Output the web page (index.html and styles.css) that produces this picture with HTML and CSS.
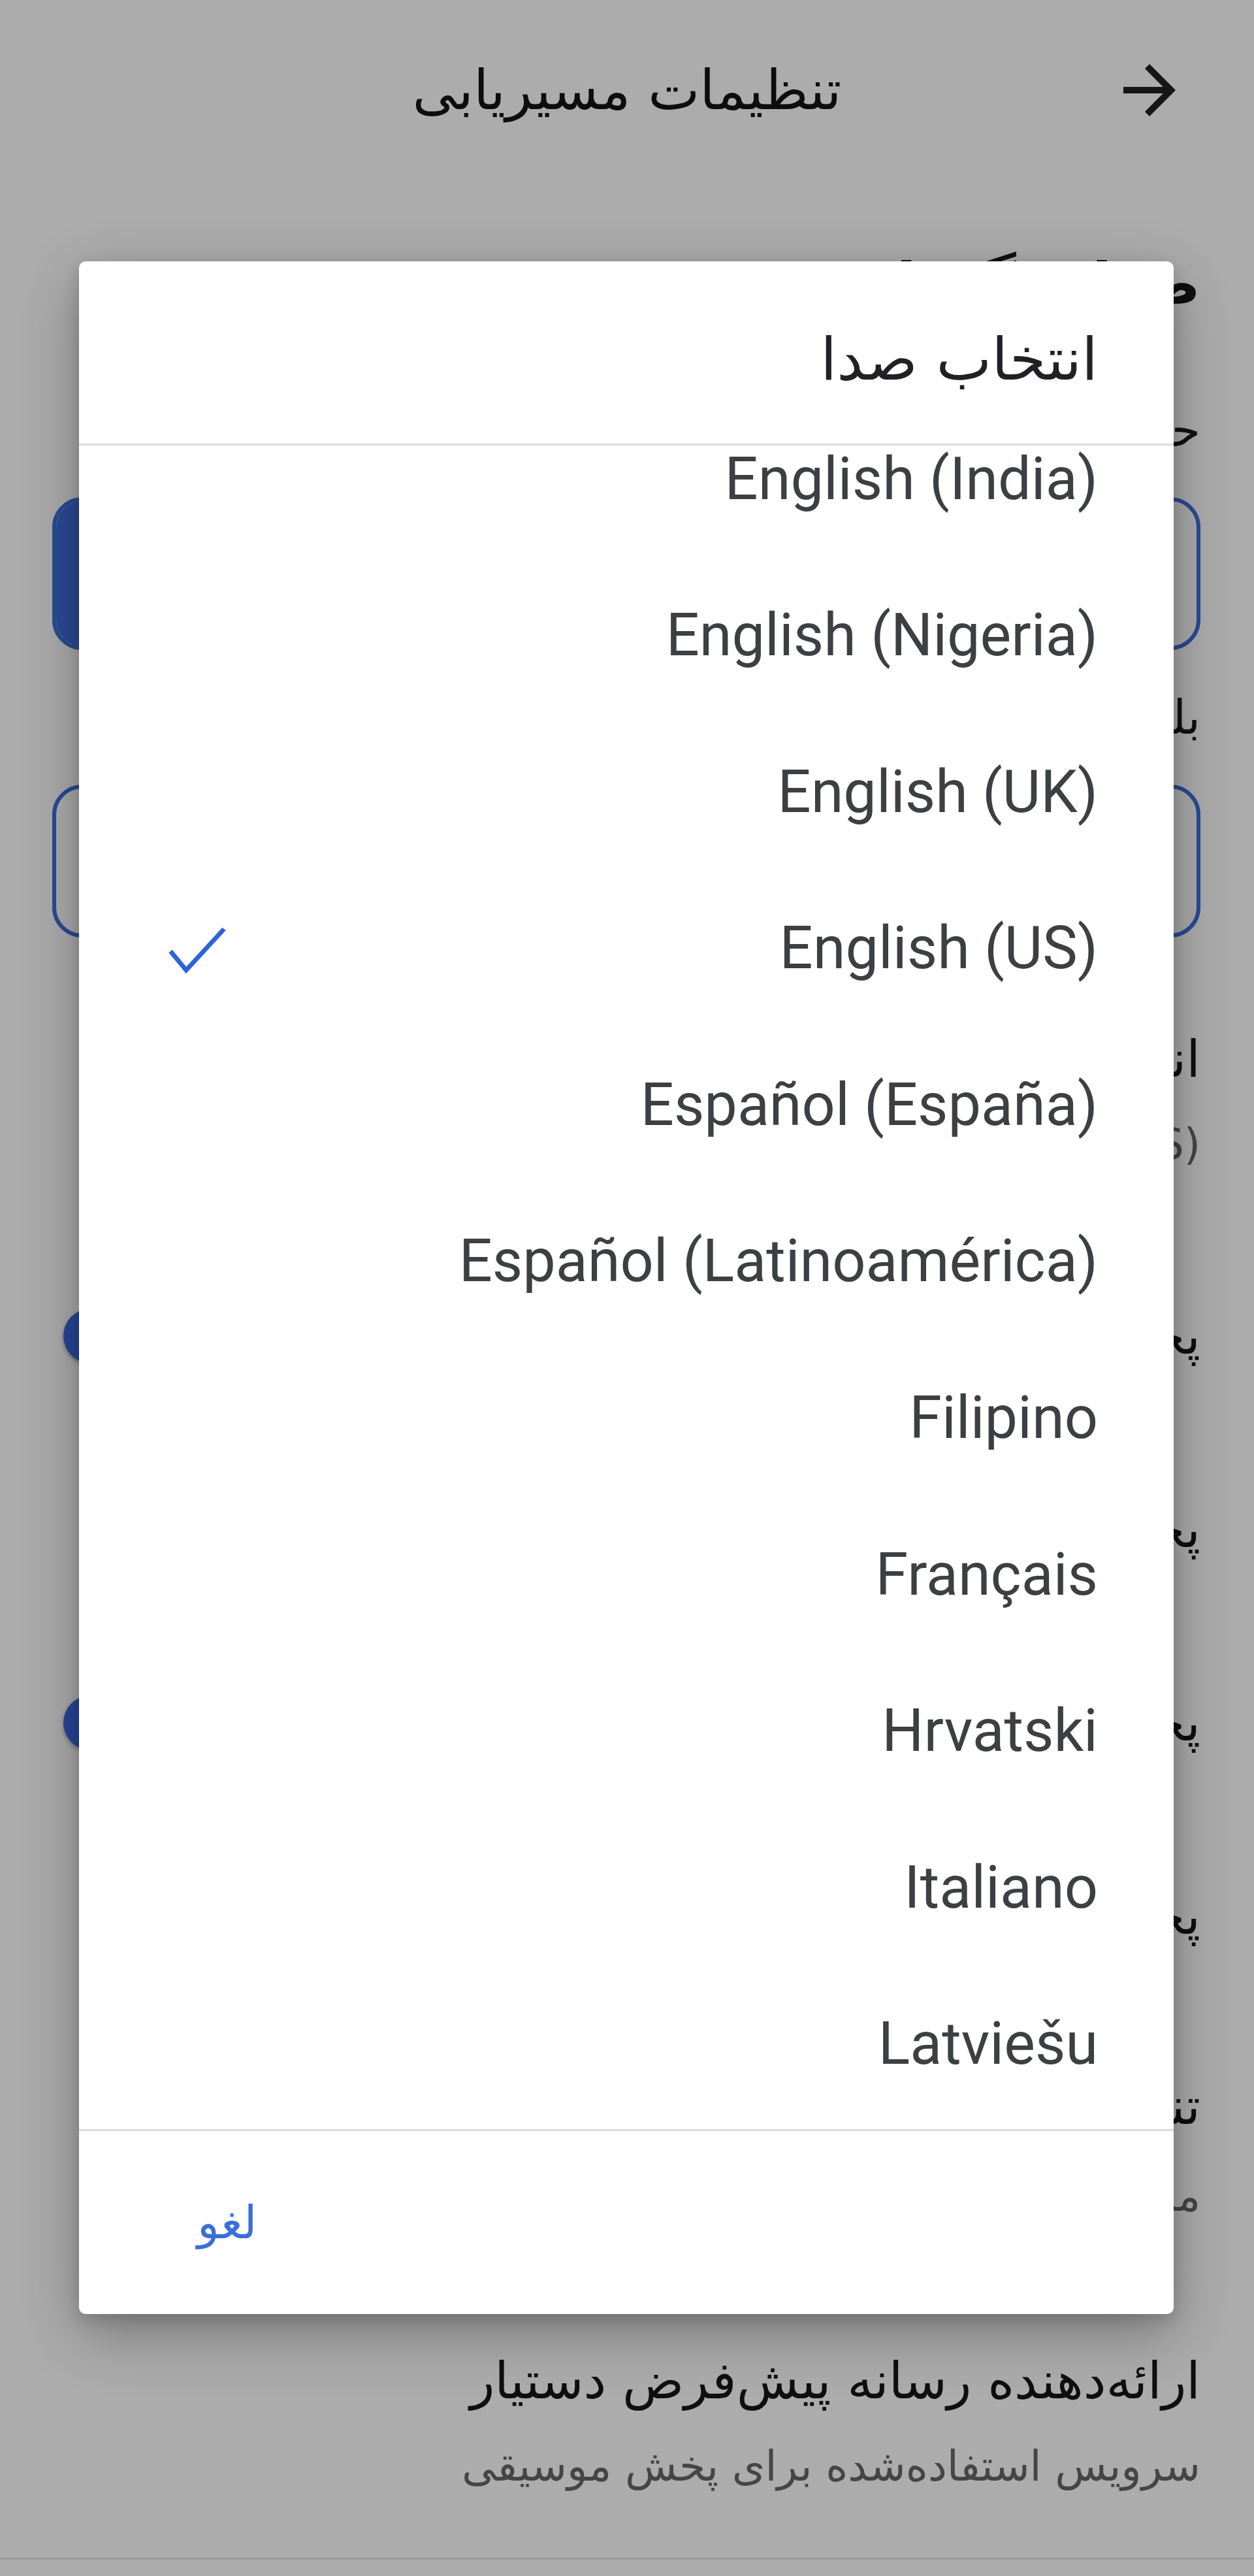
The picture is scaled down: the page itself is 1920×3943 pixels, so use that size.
FILE: index.html
```html
<!DOCTYPE html>
<html lang="fa" dir="rtl">
<head>
<meta charset="utf-8">
<title>تنظیمات مسیریابی</title>
<link rel="stylesheet" href="styles.css">
</head>
<body>
<div class="page">
  <header class="appbar">
    <span class="back">
      <svg viewBox="0 0 24 24"><path d="M12 4l-1.41 1.41L16.17 11H4v2h12.17l-5.58 5.59L12 20l8-8z"/></svg>
    </span>
    <h1 class="title">تنظیمات مسیریابی</h1>
    <span></span>
  </header>
  <main class="content">
    <h2 class="section">صدا و گفتار</h2>
    <div class="label l1">حالت بی‌صدا</div>
    <div class="seg">
      <div class="seg-item"></div>
      <div class="seg-item"></div>
      <div class="seg-item on"></div>
    </div>
    <div class="label l2">بلندی صدای راهنما</div>
    <div class="seg">
      <div class="seg-item"></div>
      <div class="seg-item"></div>
      <div class="seg-item"></div>
    </div>
    <div class="item voice">
      <div class="item-title">انتخاب صدا</div>
      <div class="item-sub"><span dir="ltr">English (US)</span></div>
    </div>
    <div class="toggles">
      <div class="trow"><span class="item-title">پخش صدا ازطریق بلوتوث</span><span class="switch"><span class="thumb"></span></span></div>
      <div class="trow"><span class="item-title">پخش صدا هنگام تماس‌ها</span><span class="switch off"><span class="thumb"></span></span></div>
      <div class="trow"><span class="item-title">پخش نشانه‌های صوتی</span><span class="switch"><span class="thumb"></span></span></div>
      <div class="trow"><span class="item-title">پخش صدای آزمایشی</span><span class="switch off"><span class="thumb"></span></span></div>
    </div>
    <div class="item i5">
      <div class="item-title">تنظیمات دستیار</div>
      <div class="item-sub s5">مدیریت دستیار هنگام رانندگی</div>
    </div>
    <div class="item i6">
      <div class="item-title">ارائه‌دهنده رسانه پیش‌فرض دستیار</div>
      <div class="item-sub">سرویس استفاده‌شده برای پخش موسیقی</div>
    </div>
  </main>
  <div class="navbar"></div>
</div>

<div class="dialog" role="dialog">
  <div class="dlg-head"><h3 class="dlg-title">انتخاب صدا</h3></div>
  <div class="dlg-list">
    <div class="dlg-inner">
      <div class="opt"><span dir="ltr">English (India)</span></div>
      <div class="opt"><span dir="ltr">English (Nigeria)</span></div>
      <div class="opt"><span dir="ltr">English (UK)</span></div>
      <div class="opt"><span dir="ltr">English (US)</span>
        <svg class="check" viewBox="0 0 90 80"><polyline points="4,44 28,73 86,10" fill="none" stroke="#2e62d9" stroke-width="7"/></svg>
      </div>
      <div class="opt"><span dir="ltr">Español (España)</span></div>
      <div class="opt"><span dir="ltr">Español (Latinoamérica)</span></div>
      <div class="opt"><span dir="ltr">Filipino</span></div>
      <div class="opt"><span dir="ltr">Français</span></div>
      <div class="opt"><span dir="ltr">Hrvatski</span></div>
      <div class="opt"><span dir="ltr">Italiano</span></div>
      <div class="opt"><span dir="ltr">Latviešu</span></div>
      <div class="opt"><span dir="ltr">Lietuvių</span></div>
    </div>
  </div>
  <div class="dlg-foot"><span class="cancel">لغو</span></div>
</div>
</body>
</html>
```

FILE: styles.css
```css
* { box-sizing: border-box; margin: 0; padding: 0; }
html, body { width: 1920px; height: 3943px; overflow: hidden; }
body {
  background: #acacac;
  font-family: "DejaVu Sans", "Noto Sans", sans-serif;
  color: #0f0f0f;
  position: relative;
}
.page { height: 3943px; display: flex; flex-direction: column; }

.appbar {
  height: 276px;
  flex: none;
  display: grid;
  grid-template-columns: 1fr auto 1fr;
  align-items: center;
  padding: 0 100px;
}
.back { width: 120px; height: 120px; display: block; }
.back svg { width: 120px; height: 120px; display: block; fill: #161616; }
.title { font-size: 84px; font-weight: 400; line-height: 100px; color: #0d0d0d; }

.content { flex: 1; padding: 0 82px 0 80px; }
.section { font-size: 88px; font-weight: 700; line-height: 100px; margin-top: 109px; }
.label { font-size: 72px; line-height: 80px; color: #121212; }
.l1 { margin-top: 133px; }
.l2 { margin-top: 63px; }

.seg {
  display: flex;
  height: 234px;
  margin-top: 63px;
  border: 6px solid #2a4b95;
  border-radius: 46px;
  overflow: hidden;
}
.seg-item { flex: 1; }
.seg-item + .seg-item { border-right: 4px solid #2a4b95; }
.seg-item.on { background: #2a4b95; }

.item-title { font-size: 78px; line-height: 80px; color: #0f0f0f; }
.item-sub { font-size: 65px; line-height: 70px; color: #454545; margin-top: 56px; }
.voice { margin-top: 146px; }
.toggles { margin-top: 110px; }
.trow { height: 296px; display: flex; align-items: center; justify-content: space-between; }
.trow .item-title { white-space: nowrap; }
.switch { width: 170px; height: 84px; position: relative; margin-left: 17px; }
.switch::before {
  content: "";
  position: absolute;
  left: 34px; right: 20px; top: 21px; height: 42px;
  border-radius: 21px;
  background: #6f86b5;
}
.switch.off::before { background: #8a8a8a; }
.thumb {
  position: absolute;
  left: 0; top: 0;
  width: 84px; height: 84px;
  border-radius: 50%;
  background: #26479a;
  box-shadow: 0 3px 6px rgba(0, 0, 0, 0.35);
}
.switch.off .thumb { left: auto; right: 0; background: #b5b5b5; }
.i5 { margin-top: 103px; }
.s5 { margin-top: 63px; }
.i6 { margin-top: 207px; }

.navbar { height: 28px; flex: none; border-top: 3px solid #999; }

.dialog {
  position: absolute;
  left: 121px; top: 400px;
  width: 1676px; height: 3142px;
  background: #fff;
  border-radius: 10px;
  box-shadow: 0 30px 90px rgba(0, 0, 0, 0.3), 0 8px 24px rgba(0, 0, 0, 0.15);
  display: flex;
  flex-direction: column;
  overflow: hidden;
}
.dlg-head { height: 282px; flex: none; padding: 100px 116px 0; border-bottom: 3px solid #dcdcdc; }
.dlg-title { font-size: 90px; line-height: 100px; font-weight: 400; color: #202124; }
.dlg-list { height: 2577px; flex: none; overflow: hidden; }
.dlg-inner { margin-top: -68.8px; }
.opt {
  height: 239.6px;
  display: flex;
  align-items: center;
  padding: 0 116px 0 136px;
  font-family: Roboto, "Liberation Sans", sans-serif;
  font-size: 90px;
  color: #3c4043;
}
.opt .check { margin-right: auto; width: 90px; height: 80px; display: block; }
.dlg-foot {
  flex: 1;
  border-top: 3px solid #dcdcdc;
  display: flex;
  align-items: center;
  justify-content: flex-end;
  padding-left: 181px;
}
.cancel { font-size: 70px; line-height: 80px; color: #3a6fd8; }
```
